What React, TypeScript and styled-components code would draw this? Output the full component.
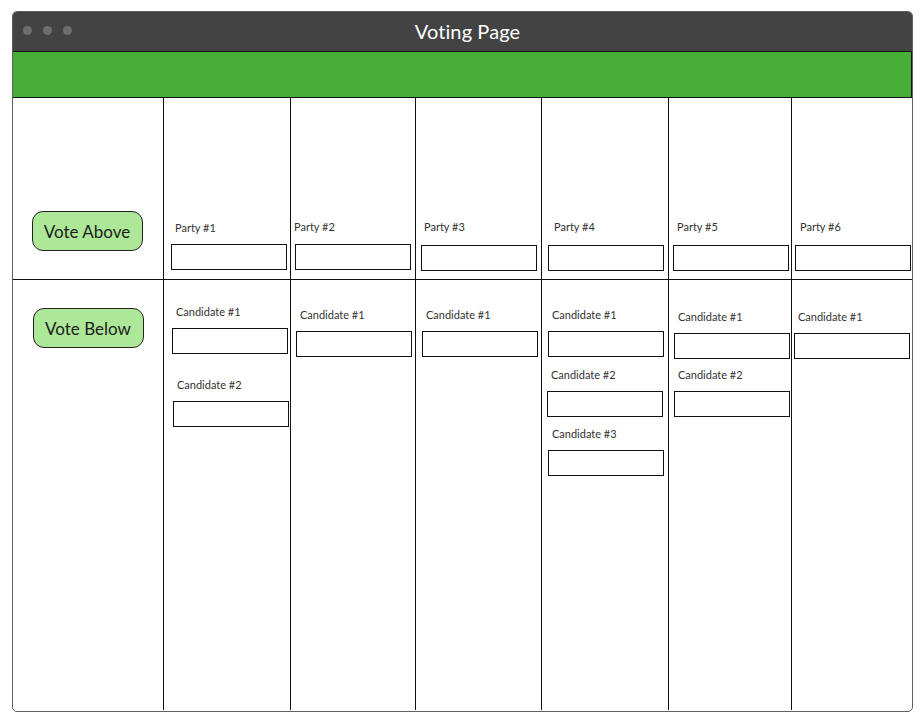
import React from "react";
import styled, { createGlobalStyle } from "styled-components";

const Global = createGlobalStyle`
  html, body { margin: 0; padding: 0; background: #ffffff; }
  body { font-family: Lato, "Open Sans", sans-serif; }
`;

const Window = styled.div`
  box-sizing: border-box;
  margin: 11px 0 0 12px;
  width: 901px;
  height: 701px;
  border: 1px solid #5f5f5f;
  border-radius: 5px;
  overflow: hidden;
  display: flex;
  flex-direction: column;
  background: #fff;
`;

const TitleBar = styled.div`
  position: relative;
  height: 39px;
  flex: none;
  background: #434343;
  display: flex;
  align-items: center;
  justify-content: center;
`;

const Dots = styled.div`
  position: absolute;
  left: 10px;
  top: 14px;
  display: flex;
  gap: 11px;
`;

const Dot = styled.span`
  width: 9px;
  height: 9px;
  border-radius: 50%;
  background: #6e6e6e;
`;

const Title = styled.div`
  color: #ffffff;
  font-family: Lato, "Open Sans", sans-serif;
  font-size: 20px;
  letter-spacing: 0.1px;
  margin-left: 10px;
  margin-top: -2px;
`;

const GreenBar = styled.div`
  box-sizing: border-box;
  height: 47px;
  flex: none;
  background: #47ae37;
  border: 1px solid #111;
  margin-left: -1px;
`;

const Grid = styled.div`
  flex: 1;
  display: grid;
  grid-template-columns: 151px 127px 125px 126px 127px 123px 120px;
  grid-template-rows: 182px 1fr;
`;

const Cell = styled.div<{ $last?: boolean; $top?: boolean }>`
  box-sizing: border-box;
  display: flex;
  flex-direction: column;
  border-right: ${(p) => (p.$last ? "none" : "1px solid #111")};
  border-bottom: ${(p) => (p.$top ? "1px solid #111" : "none")};
  margin-bottom: ${(p) => (p.$top ? "0" : "1px")};
`;

const VoteCell = styled(Cell)<{ $pt: number }>`
  align-items: center;
  padding-top: ${(p) => p.$pt}px;
`;

const VoteButton = styled.button<{ $dx: number }>`
  box-sizing: border-box;
  width: 111px;
  height: 40px;
  margin-left: ${(p) => p.$dx}px;
  border: 1px solid #222;
  border-radius: 11px;
  background: #ade899;
  color: #1c1c1c;
  font-family: Lato, "Open Sans", sans-serif;
  font-size: 17px;
  padding: 0;
  cursor: pointer;
`;

const Field = styled.div<{ $mt: number }>`
  display: flex;
  flex-direction: column;
  margin-top: ${(p) => p.$mt}px;
`;

const Label = styled.div<{ $lx: number }>`
  margin-left: ${(p) => p.$lx}px;
  height: 14px;
  line-height: 14px;
  font-size: 11px;
  color: #333;
  white-space: nowrap;
`;

const Box = styled.div<{ $ix: number; $gap: number }>`
  box-sizing: border-box;
  margin-left: ${(p) => p.$ix}px;
  margin-top: ${(p) => p.$gap}px;
  width: 116px;
  height: 26px;
  border: 1px solid #111;
  background: #fff;
`;

type F = { label: string; mt: number; lx: number; ix: number; gap: number };

const parties: F[] = [
  { label: "Party #1", mt: 123, lx: 11, ix: 7, gap: 9 },
  { label: "Party #2", mt: 122, lx: 3, ix: 4, gap: 10 },
  { label: "Party #3", mt: 122, lx: 8, ix: 5, gap: 11 },
  { label: "Party #4", mt: 122, lx: 12, ix: 6, gap: 11 },
  { label: "Party #5", mt: 122, lx: 8, ix: 4, gap: 11 },
  { label: "Party #6", mt: 122, lx: 8, ix: 3, gap: 11 },
];

const candidates: F[][] = [
  [
    { label: "Candidate #1", mt: 25, lx: 12, ix: 8, gap: 9 },
    { label: "Candidate #2", mt: 24, lx: 13, ix: 9, gap: 9 },
  ],
  [{ label: "Candidate #1", mt: 28, lx: 9, ix: 5, gap: 9 }],
  [{ label: "Candidate #1", mt: 28, lx: 10, ix: 6, gap: 9 }],
  [
    { label: "Candidate #1", mt: 28, lx: 10, ix: 6, gap: 9 },
    { label: "Candidate #2", mt: 11, lx: 9, ix: 5, gap: 9 },
    { label: "Candidate #3", mt: 10, lx: 10, ix: 6, gap: 9 },
  ],
  [
    { label: "Candidate #1", mt: 30, lx: 9, ix: 5, gap: 9 },
    { label: "Candidate #2", mt: 9, lx: 9, ix: 5, gap: 9 },
  ],
  [{ label: "Candidate #1", mt: 30, lx: 6, ix: 2, gap: 9 }],
];

const FieldView = ({ f }: { f: F }) => (
  <Field $mt={f.mt}>
    <Label $lx={f.lx}>{f.label}</Label>
    <Box $ix={f.ix} $gap={f.gap} />
  </Field>
);

export default function App() {
  return (
    <>
      <Global />
      <Window>
        <TitleBar>
          <Dots>
            <Dot />
            <Dot />
            <Dot />
          </Dots>
          <Title>Voting Page</Title>
        </TitleBar>
        <GreenBar />
        <Grid>
          <VoteCell $top $pt={113}>
            <VoteButton $dx={-2}>Vote Above</VoteButton>
          </VoteCell>
          {parties.map((p, i) => (
            <Cell key={p.label} $top $last={i === parties.length - 1}>
              <FieldView f={p} />
            </Cell>
          ))}
          <VoteCell $pt={28}>
            <VoteButton $dx={0}>Vote Below</VoteButton>
          </VoteCell>
          {candidates.map((col, i) => (
            <Cell key={i} $last={i === candidates.length - 1}>
              {col.map((f) => (
                <FieldView key={f.label} f={f} />
              ))}
            </Cell>
          ))}
        </Grid>
      </Window>
    </>
  );
}
